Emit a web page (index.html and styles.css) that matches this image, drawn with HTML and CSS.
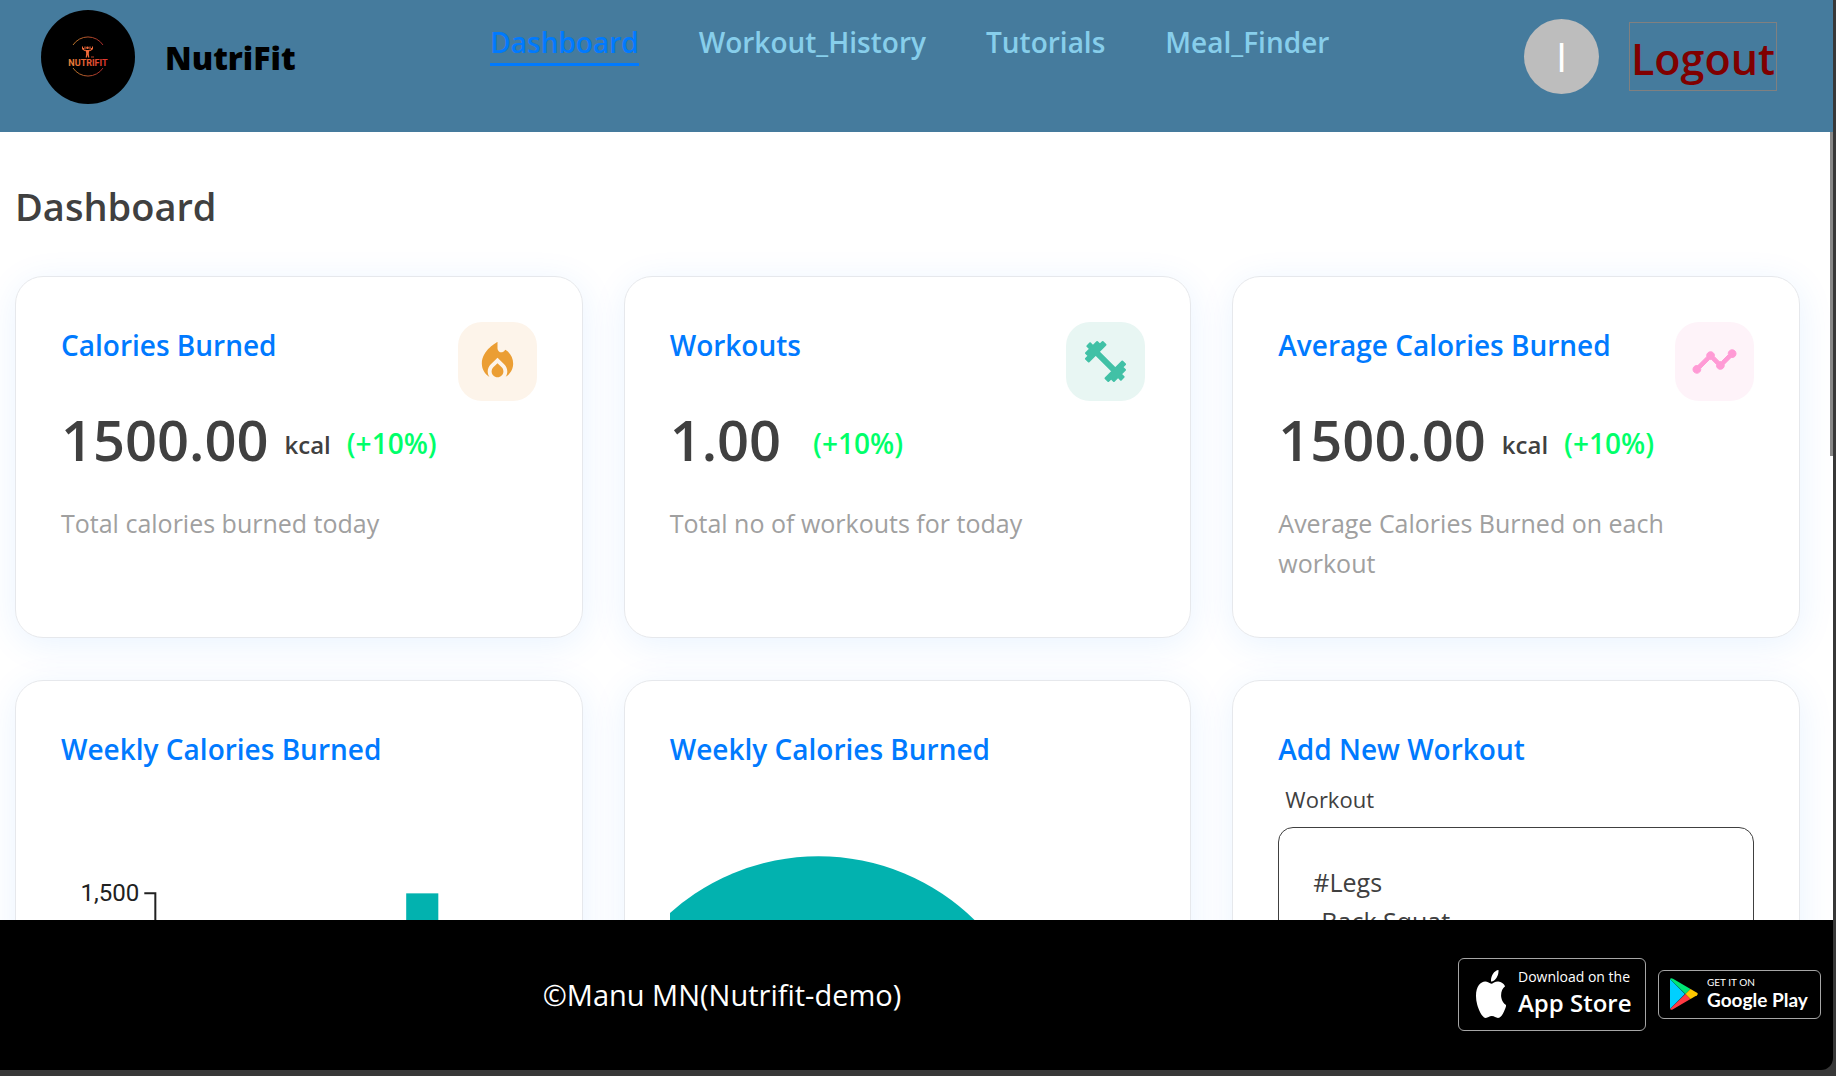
FILE: index.html
```html
<!DOCTYPE html>
<html lang="en">
<head>
<meta charset="utf-8">
<meta name="viewport" content="width=device-width, initial-scale=1">
<title>NutriFit</title>
<link rel="stylesheet" href="styles.css">
</head>
<body>
<div class="app">
  <header class="navbar">
    <a class="brand" href="#">
      <svg class="brand-logo" viewBox="0 0 94 94" role="img" aria-label="NutriFit logo">
        <defs>
          <linearGradient id="ring" x1="0" x2="1" y1="0" y2="0">
            <stop offset="0" stop-color="#b8752a"/>
            <stop offset="1" stop-color="#a82b2b"/>
          </linearGradient>
          <linearGradient id="word" x1="0" x2="1" y1="0" y2="0">
            <stop offset="0" stop-color="#e8863a"/>
            <stop offset="1" stop-color="#e0322e"/>
          </linearGradient>
        </defs>
        <circle cx="47" cy="47" r="47" fill="#000"/>
        <path d="M32 35a18 18 0 0 1 30 0M32 58a18 18 0 0 0 30 0" fill="none" stroke="url(#ring)" stroke-width="1"/>
        <path d="M42.500 38v2l3 1M50.500 38v2l-3 1" fill="none" stroke="#f26b3a" stroke-width="1"/>
        <path d="M41.500 36.500v3M44 36.500v3M49 36.500v3M51.500 36.500v3" stroke="#f26b3a" stroke-width="1"/>
        <circle cx="46.500" cy="37.800" r="1.300" fill="#f26b3a"/>
        <path d="M44.800 40h3.400l-.4 3.500.5 4h-1.200l-.6-3-.6 3h-1.200l.5-4z" fill="#f26b3a"/>
        <path d="M50 47h3" stroke="#b8452a" stroke-width="1"/>
        <text class="logo-text" x="47" y="56" text-anchor="middle">NUTRIFIT</text>
      </svg>
      <span class="brand-name">NutriFit</span>
    </a>
    <nav class="links">
      <a class="link active" href="#">Dashboard</a>
      <a class="link" href="#">Workout_History</a>
      <a class="link" href="#">Tutorials</a>
      <a class="link" href="#">Meal_Finder</a>
    </nav>
    <div class="account">
      <span class="avatar">I</span>
      <button class="logout" type="button">Logout</button>
    </div>
  </header>

  <main class="content">
    <h1 class="page-title">Dashboard</h1>
    <div class="grid">
      <section class="card stat">
        <div class="stat-body">
          <h2 class="card-title">Calories Burned</h2>
          <p class="value"><span>1500.00</span> <span class="unit">kcal</span> <span class="change">(+10%)</span></p>
          <p class="desc">Total calories burned today</p>
        </div>
        <span class="tile orange">
          <svg viewBox="0 0 24 24" aria-hidden="true"><path d="M12 12.900l-2.130 2.090c-.56.560-.87 1.290-.87 2.070C9 18.680 10.350 20 12 20s3-1.320 3-2.940c0-.78-.31-1.520-.87-2.070L12 12.900z"/><path d="M16 6l-.440.550C14.380 8.020 12 7.190 12 5.300V2S4 6 4 13c0 2.920 1.560 5.470 3.890 6.860-.56-.79-.89-1.760-.89-2.800 0-1.320.52-2.560 1.470-3.500L12 10.100l3.530 3.470c.95.930 1.470 2.170 1.470 3.500 0 1.020-.31 1.960-.85 2.750 1.890-1.150 3.290-3.060 3.710-5.300.66-3.550-1.070-6.900-3.860-8.520z"/></svg>
        </span>
      </section>
      <section class="card stat">
        <div class="stat-body">
          <h2 class="card-title">Workouts</h2>
          <p class="value"><span>1.00</span> <span class="unit"></span> <span class="change">(+10%)</span></p>
          <p class="desc">Total no of workouts for today</p>
        </div>
        <span class="tile green">
          <svg viewBox="0 0 24 24" aria-hidden="true"><path stroke="currentColor" stroke-width="1" stroke-linejoin="round" d="M20.570 14.860 22 13.430 20.570 12 17 15.570 8.430 7 12 3.430 10.570 2 9.140 3.430 7.710 2 5.570 4.140 4.140 2.710 2.710 4.140l1.430 1.430L2 7.710l1.430 1.430L2 10.570 3.430 12 7 8.430 15.570 17 12 20.570 13.430 22l1.430-1.430L16.290 22l2.140-2.140 1.430 1.430 1.430-1.430-1.430-1.430L22 16.290z"/></svg>
        </span>
      </section>
      <section class="card stat">
        <div class="stat-body">
          <h2 class="card-title">Average Calories Burned</h2>
          <p class="value"><span>1500.00</span> <span class="unit">kcal</span> <span class="change">(+10%)</span></p>
          <p class="desc">Average Calories Burned on each workout</p>
        </div>
        <span class="tile pink">
          <svg viewBox="0 0 24 24" aria-hidden="true"><path stroke="currentColor" stroke-width=".5" d="M23 8c0 1.100-.9 2-2 2-.180 0-.350-.020-.510-.070l-3.560 3.550c.050.160.070.340.070.520 0 1.100-.9 2-2 2s-2-.9-2-2c0-.180.020-.360.070-.520l-2.550-2.550c-.160.050-.340.070-.520.070s-.360-.020-.520-.070l-4.550 4.560c.050.160.070.330.070.510 0 1.100-.9 2-2 2s-2-.9-2-2 .9-2 2-2c.180 0 .350.020.510.070l4.560-4.550C8.020 9.360 8 9.180 8 9c0-1.100.9-2 2-2s2 .9 2 2c0 .180-.020.360-.070.520l2.550 2.550c.160-.050.340-.070.520-.070s.360.020.520.070l3.550-3.560C19.020 8.350 19 8.180 19 8c0-1.100.9-2 2-2s2 .9 2 2z"/></svg>
        </span>
      </section>

      <section class="card panel">
        <h2 class="card-title">Weekly Calories Burned</h2>
        <svg class="chart" viewBox="0 0 474 350" role="img" aria-label="Weekly calories bar chart">
          <text class="tick" x="78" y="110" text-anchor="end">1,500</text>
          <path d="M83 102h11v248" fill="none" stroke="#212121" stroke-width="2"/>
          <rect x="344" y="102" width="32" height="248" fill="#02b2af"/>
        </svg>
      </section>
      <section class="card panel">
        <h2 class="card-title">Weekly Calories Burned</h2>
        <svg class="chart" viewBox="0 0 474 350" role="img" aria-label="Weekly calories pie chart">
          <circle cx="148" cy="287" r="222" fill="#02b2af"/>
        </svg>
      </section>
      <section class="card panel">
        <h2 class="card-title">Add New Workout</h2>
        <label class="field-label" for="workout">Workout</label>
        <textarea class="field" id="workout" rows="10">#Legs
-Back Squat</textarea>
      </section>
    </div>
    <span class="thumb"></span>
  </main>

  <footer class="footer">
    <p class="copyright">©Manu MN(Nutrifit-demo)</p>
    <div class="stores">
      <a class="store apple" href="#">
        <svg class="apple-icon" viewBox="4 9 376 452" preserveAspectRatio="none" aria-hidden="true"><path fill="#fff" d="M318.700 246.700c-.2-36.700 16.400-64.400 50-84.800-18.800-26.900-47.200-41.700-84.700-44.600-35.500-2.800-74.300 20.700-88.500 20.700-15 0-49.400-19.700-76.400-19.700C63.300 119.200 4 163.200 4 252.700c0 26.400 4.800 53.700 14.500 81.900 12.900 36.900 59.400 127.400 107.900 125.900 25.400-.6 43.300-18 76.400-18 32.100 0 48.700 18 77.100 18 48.900-.7 90.900-82.900 103.200-119.900-65.600-30.900-64.400-90.600-64.400-93.900zM261.700 82.200c27.400-32.500 24.900-62.100 24.100-72.700-24.200 1.400-52.200 16.500-68.200 35.100-17.600 19.900-27.900 44.500-25.700 72.200 26.200 2 50-11.500 69.800-34.600z"/></svg>
        <span class="store-text"><span class="store-small">Download on the</span><span class="store-name">App Store</span></span>
      </a>
      <a class="store google" href="#">
        <svg class="play-icon" viewBox="0 0 28 32" aria-hidden="true"><path fill="#00d0ff" d="M0 1v30l15-15z"/><path fill="#00e676" d="M0 1Q1-.5 3 .8L20.500 11 15.500 16z"/><path fill="#ff3a44" d="M0 31Q1 32.500 3 31.200L20.500 21 15.500 16z"/><path fill="#ffc800" d="M20.500 11l6.500 3.800q1.500 1.200 0 2.400L20.500 21l-5-5z"/></svg>
        <span class="store-text"><span class="store-small">GET IT ON</span><span class="store-name">Google Play</span></span>
      </a>
    </div>
  </footer>
</div>
</body>
</html>
```

FILE: styles.css
```css
* { box-sizing: border-box; }

body {
  margin: 0;
  background: #383838;
  color: #404040;
  font-family: "Open Sans", "Noto Sans", sans-serif;
}

h1, h2, p { margin: 0; }
a { color: inherit; text-decoration: none; }

.app {
  display: flex;
  flex-direction: column;
  height: calc(100vh - 6px);
  margin-right: 3px;
  border-bottom-right-radius: 12px;
  overflow: hidden;
}

/* Top bar */
.navbar {
  display: flex;
  flex: none;
  align-items: flex-start;
  justify-content: space-between;
  height: 132px;
  padding: 10px 56px 0 41px;
  background: #457b9d;
}

.brand {
  display: flex;
  align-items: center;
  gap: 30px;
  color: #000;
}

.brand-logo { width: 94px; height: 94px; }
.logo-text { font: 700 9px "Roboto", sans-serif; fill: url(#word); }
.brand-name { font-size: 32px; font-weight: 800; }

.links { display: flex; gap: 60px; padding-top: 12px; }

.link {
  color: #87ceeb;
  font-size: 28px;
  font-weight: 600;
  line-height: 40px;
}

.link.active {
  height: 44px;
  border-bottom: 3px solid #007aff;
  color: #007aff;
}

.account { display: flex; align-items: center; gap: 30px; padding-top: 9px; }

.avatar {
  display: grid;
  place-items: center;
  width: 75px;
  height: 75px;
  border-radius: 50%;
  background: #bdbdbd;
  color: #fff;
  font-size: 40px;
  line-height: 50px;
}

.logout {
  height: 69px;
  padding: 4px 1px 0;
  border: 1px solid #808080;
  background: none;
  color: #800000;
  font: 600 43px/60px "Open Sans", "Noto Sans", sans-serif;
}

/* Page */
.content {
  position: relative;
  flex: 1;
  min-height: 0;
  padding: 46px 33px 0 15px;
  overflow: hidden;
  background: #fff;
}

.page-title { font-size: 38px; font-weight: 600; line-height: 56px; }

.grid {
  display: grid;
  grid-template-columns: repeat(3, minmax(0, 1fr));
  gap: 42px 41px;
  margin-top: 42px;
}

.card {
  padding: 45px;
  border: 1px solid #e6e8ec;
  border-radius: 28px;
  box-shadow: 1px 6px 36px rgba(0, 122, 255, 0.09);
}

.card-title {
  color: #007aff;
  font-size: 28px;
  font-weight: 600;
  line-height: 46px;
}

.stat { display: flex; min-height: 362px; }
.stat-body { flex: 1; min-width: 0; }

.value {
  display: flex;
  align-items: flex-end;
  gap: 16px;
  margin-top: 37px;
  font-size: 56px;
  font-weight: 600;
  line-height: 68px;
  white-space: nowrap;
}

.unit { font-size: 24px; line-height: 56px; }
.change { color: #00ff6a; font-size: 28px; line-height: 60px; }

.desc {
  margin-top: 30px;
  color: #a0a0a0;
  font-size: 25px;
  line-height: 40px;
}

.tile {
  display: grid;
  flex: none;
  place-items: center;
  width: 79px;
  height: 79px;
  border-radius: 24px;
}

.tile svg { width: 47px; height: 47px; fill: currentColor; }
.orange { background: #fdf4ea; color: #eb9e34; }
.green { background: #e8f6f3; color: #41c1a6; }
.pink { background: #fef3f9; color: #ff9ad5; }

.panel { display: flex; flex-direction: column; min-height: 500px; }
.chart { display: block; width: 100%; height: auto; margin-top: 19px; }
.tick { font: 24px "Roboto", sans-serif; fill: #212121; }

.field-label { padding-left: 7px; font-size: 22px; line-height: 55px; }

.field {
  display: block;
  width: 100%;
  height: 300px;
  padding: 35px 34px;
  border: 1px solid #404040;
  border-radius: 15px;
  background: none;
  color: #404040;
  font: 25px/39px "Open Sans", "Noto Sans", sans-serif;
  resize: none;
}

/* Scroll indicator laid over the page edge */
.thumb {
  position: absolute;
  top: 0;
  right: 0;
  width: 3px;
  height: 324px;
  background: #888;
}

/* Footer */
.footer {
  display: grid;
  flex: none;
  grid-template-columns: 1fr auto;
  align-items: center;
  height: 150px;
  padding: 0 12px 2px 0;
  background: #000;
  color: #fff;
}

.copyright { padding-right: 14px; font-size: 29px; text-align: center; }
.stores { display: flex; align-items: center; gap: 12px; }

.store {
  display: flex;
  align-items: center;
  border: 1px solid #a6a6a6;
  border-radius: 6px;
}

.store-text { display: flex; flex-direction: column; white-space: nowrap; }

.apple { width: 188px; height: 73px; padding-left: 17px; gap: 12px; }
.apple-icon { width: 30px; height: 48px; }
.apple .store-small { font-size: 14px; line-height: 18px; }
.apple .store-name { font-size: 24px; font-weight: 600; line-height: 34px; }

.google { width: 163px; height: 49px; padding-left: 11px; gap: 9px; }
.play-icon { width: 28px; height: 32px; }
.google .store-small { font: 10px/12px "Lato", sans-serif; }
.google .store-name { font: 700 19px/24px "Lato", sans-serif; }
```
